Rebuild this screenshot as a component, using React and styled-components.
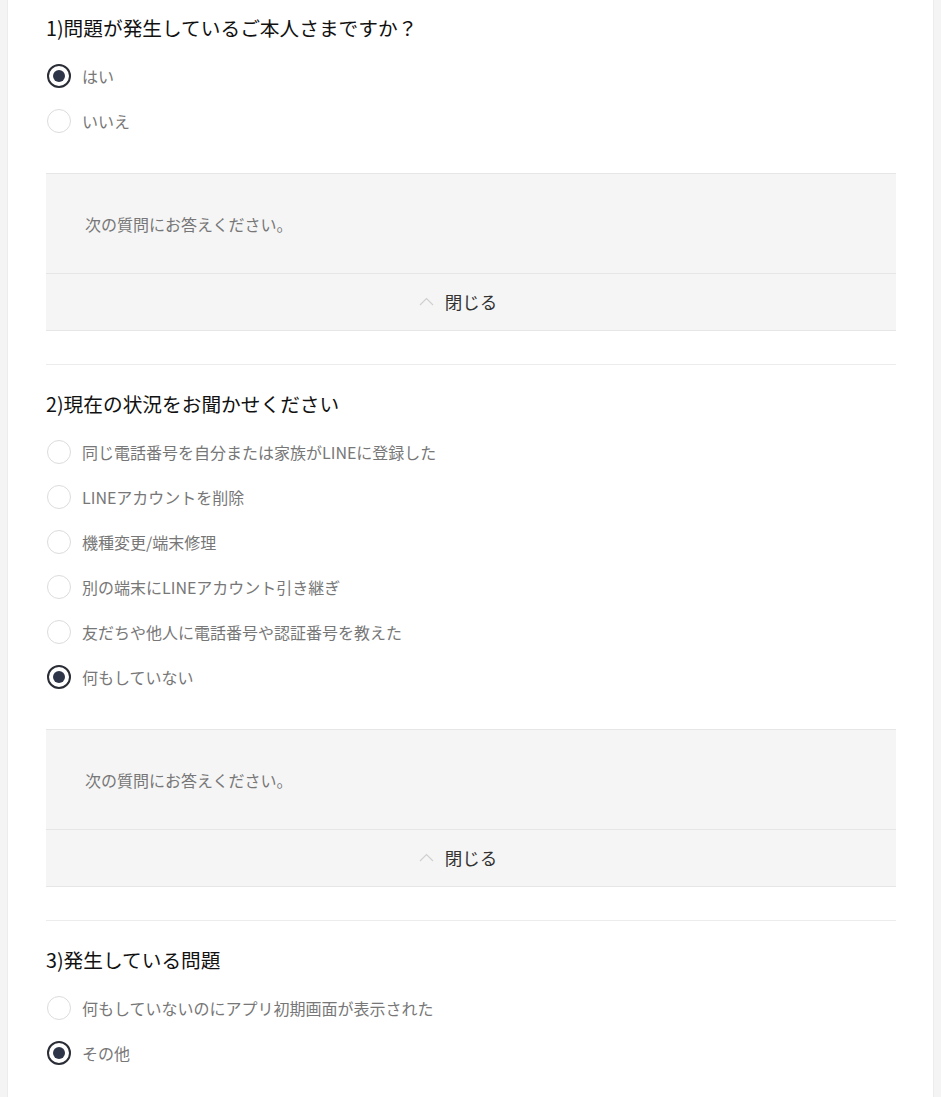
import React, { useState } from "react";
import styled, { createGlobalStyle } from "styled-components";

const GlobalStyle = createGlobalStyle`
  html, body {
    margin: 0;
    padding: 0;
    background: #f4f4f4;
  }
  body {
    font-family: "Noto Sans CJK JP", "Noto Sans", sans-serif;
    -webkit-font-smoothing: antialiased;
  }
`;

const Page = styled.div`
  margin: 0 7px;
  padding: 0 37px 0 38px;
  min-height: 1097px;
  background: #fff;
  border-left: 1px solid #ececec;
  border-right: 1px solid #ececec;
`;

const Section = styled.section`
  padding-top: ${(props) => (props.first ? "14px" : "25px")};
  border-top: ${(props) => (props.first ? "none" : "1px solid #ececec")};
`;

const Title = styled.h2`
  margin: 0;
  font-size: 19.7px;
  font-weight: 400;
  line-height: 28px;
  color: #111;
`;

const Options = styled.div`
  margin-top: 11px;
  display: flex;
  flex-direction: column;
`;

const Option = styled.label`
  height: 45px;
  display: flex;
  align-items: center;
  gap: 11px;
  cursor: pointer;
`;

const Radio = styled.span`
  box-sizing: border-box;
  width: 24px;
  height: 24px;
  margin-left: 1px;
  flex-shrink: 0;
  border-radius: 50%;
  border: ${(props) => (props.checked ? "2px solid #2b2d36" : "1px solid #dcdcdc")};
  display: flex;
  align-items: center;
  justify-content: center;

  &::after {
    content: "";
    width: 12px;
    height: 12px;
    border-radius: 50%;
    background: #2f3548;
    display: ${(props) => (props.checked ? "block" : "none")};
  }
`;

const Label = styled.span`
  font-size: 16px;
  color: #777;
  line-height: 24px;
`;

const Answer = styled.div`
  margin-top: 30px;
  margin-bottom: 33px;
  background: #f5f5f5;
  border-top: 1px solid #e6e6e6;
  border-bottom: 1px solid #e6e6e6;
`;

const Message = styled.div`
  height: 99px;
  padding-left: 39px;
  display: flex;
  align-items: center;
  font-size: 16px;
  color: #777;
`;

const CloseButton = styled.button`
  width: 100%;
  height: 57px;
  border: none;
  border-top: 1px solid #e6e6e6;
  background: transparent;
  display: flex;
  align-items: center;
  justify-content: center;
  gap: 11px;
  font-family: inherit;
  font-size: 17.5px;
  color: #333;
  cursor: pointer;
  padding: 0 0 1px 0;

  svg {
    margin-left: -26px;
  }
`;

const Chevron = () => (
  <svg width="15" height="9" viewBox="0 0 15 9" fill="none">
    <path d="M1 8 L7.5 1.5 L14 8" stroke="#cfcfcf" strokeWidth="1.1" />
  </svg>
);

const questions = [
  {
    title: "1)問題が発生しているご本人さまですか？",
    options: ["はい", "いいえ"],
    selected: 0,
    answer: true,
  },
  {
    title: "2)現在の状況をお聞かせください",
    options: [
      "同じ電話番号を自分または家族がLINEに登録した",
      "LINEアカウントを削除",
      "機種変更/端末修理",
      "別の端末にLINEアカウント引き継ぎ",
      "友だちや他人に電話番号や認証番号を教えた",
      "何もしていない",
    ],
    selected: 5,
    answer: true,
  },
  {
    title: "3)発生している問題",
    options: ["何もしていないのにアプリ初期画面が表示された", "その他"],
    selected: 1,
    answer: false,
  },
];

const Question = ({ question, first }) => {
  const [selected, setSelected] = useState(question.selected);
  const [open, setOpen] = useState(true);

  return (
    <Section first={first}>
      <Title>{question.title}</Title>
      <Options>
        {question.options.map((option, i) => (
          <Option key={option} onClick={() => setSelected(i)}>
            <Radio checked={selected === i} />
            <Label>{option}</Label>
          </Option>
        ))}
      </Options>
      {question.answer && (
        <Answer>
          {open && <Message>次の質問にお答えください。</Message>}
          <CloseButton onClick={() => setOpen(!open)}>
            <Chevron />
            閉じる
          </CloseButton>
        </Answer>
      )}
    </Section>
  );
};

const App = () => {
  return (
    <>
      <GlobalStyle />
      <Page>
        {questions.map((q, i) => (
          <Question key={q.title} question={q} first={i === 0} />
        ))}
      </Page>
    </>
  );
};

export default App;
